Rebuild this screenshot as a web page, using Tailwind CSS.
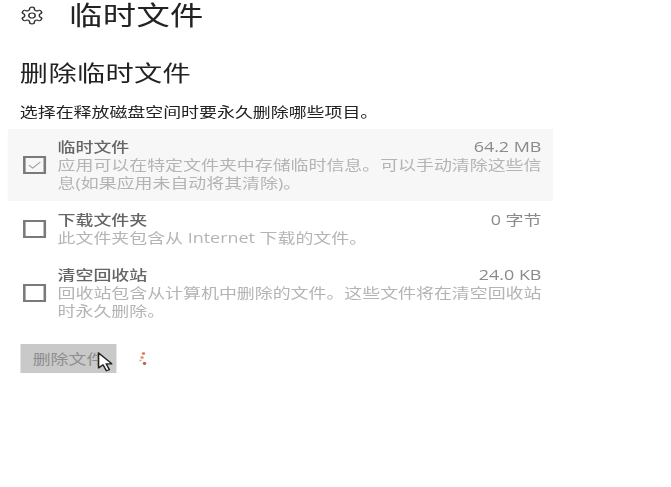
<!DOCTYPE html>
<html lang="zh-CN">
<head>
    <meta charset="UTF-8">
    <title>临时文件</title>
    <script src="https://cdn.jsdelivr.net/npm/@tailwindcss/browser@4"></script>
</head>
<body class="bg-white overflow-hidden font-['Open_Sans','Noto_Sans_CJK_SC',sans-serif]">
    <div class="w-[524px] h-[487px] origin-top-left scale-x-[1.28] blur-[0.5px]">
        <!-- page title -->
        <div class="flex items-center h-[30px] pl-[15px] gap-[19px]">
            <svg class="w-[20px] h-[23px] text-[#333]" viewBox="0 0 24 24" fill="none" stroke="currentColor" stroke-width="1.4" stroke-linejoin="round">
                <circle cx="12" cy="12" r="3"/>
                <path d="M12.22 2h-.44a2 2 0 0 0-2 2v.18a2 2 0 0 1-1 1.73l-.43.25a2 2 0 0 1-2 0l-.15-.08a2 2 0 0 0-2.73.73l-.22.38a2 2 0 0 0 .73 2.73l.15.1a2 2 0 0 1 1 1.72v.51a2 2 0 0 1-1 1.74l-.15.09a2 2 0 0 0-.73 2.73l.22.38a2 2 0 0 0 2.73.73l.15-.08a2 2 0 0 1 2 0l.43.25a2 2 0 0 1 1 1.73V20a2 2 0 0 0 2 2h.44a2 2 0 0 0 2-2v-.18a2 2 0 0 1 1-1.73l.43-.25a2 2 0 0 1 2 0l.15.08a2 2 0 0 0 2.73-.73l.22-.39a2 2 0 0 0-.73-2.73l-.15-.08a2 2 0 0 1-1-1.74v-.5a2 2 0 0 1 1-1.74l.15-.09a2 2 0 0 0 .73-2.73l-.22-.38a2 2 0 0 0-2.73-.73l-.15.08a2 2 0 0 1-2 0l-.43-.25a2 2 0 0 1-1-1.73V4a2 2 0 0 0-2-2z"/>
            </svg>
            <h1 class="text-[26px] leading-[30px] text-[#222] tracking-[0.3px]">临时文件</h1>
        </div>

        <h2 class="mt-[26px] pl-[15.5px] text-[22px] leading-[32px] text-[#222] tracking-[0.3px]">删除临时文件</h2>
        <p class="mt-[14px] pl-[15.5px] text-[14px] leading-[20px] text-[#222]">选择在释放磁盘空间时要永久删除哪些项目。</p>

        <div class="mt-[7px] ml-[6px] w-[426px]">
            <div class="flex items-center gap-[9px] pl-[12px] pr-[9px] py-[9px] bg-[#f7f7f7]">
                <div class="w-[18px] h-[18px] shrink-0 border-2 border-[#7a7a7a] flex items-center justify-center">
                    <svg class="w-[14px] h-[14px]" viewBox="0 0 14 14" fill="none" stroke="#999" stroke-width="1"><path d="M2.5 7l3 3 6-6"/></svg>
                </div>
                <div class="flex-1 text-[14px] leading-[18px]">
                    <div class="flex justify-between text-[#666]"><span class="font-medium">临时文件</span><span class="text-[#8a8a8a]">64.2 MB</span></div>
                    <p class="text-[#b4b4b4]">应用可以在特定文件夹中存储临时信息。可以手动清除这些信息(如果应用未自动将其清除)。</p>
                </div>
            </div>
            <div class="mt-px flex items-center gap-[9px] pl-[12px] pr-[9px] py-[9px]">
                <div class="w-[18px] h-[18px] shrink-0 border-2 border-[#7a7a7a]"></div>
                <div class="flex-1 text-[14px] leading-[18px]">
                    <div class="flex justify-between text-[#666]"><span class="font-medium">下载文件夹</span><span class="text-[#8a8a8a]">0 字节</span></div>
                    <p class="text-[#b4b4b4]">此文件夹包含从 Internet 下载的文件。</p>
                </div>
            </div>
            <div class="mt-px flex items-center gap-[9px] pl-[12px] pr-[9px] py-[9px]">
                <div class="w-[18px] h-[18px] shrink-0 border-2 border-[#7a7a7a]"></div>
                <div class="flex-1 text-[14px] leading-[18px]">
                    <div class="flex justify-between text-[#666]"><span class="font-medium">清空回收站</span><span class="text-[#8a8a8a]">24.0 KB</span></div>
                    <p class="text-[#b4b4b4]">回收站包含从计算机中删除的文件。这些文件将在清空回收站时永久删除。</p>
                </div>
            </div>
        </div>

        <!-- button and spinner -->
        <div class="mt-[15px] ml-[16px] flex items-center gap-[16px]">
            <div class="relative w-[75px] h-[29px] bg-[#c9c9c9] flex items-center justify-center text-[14px] text-[#8e8e8e]">
                删除文件
                <svg class="absolute left-[60px] top-[8px] w-[12px] h-[21px]" viewBox="0 0 12 21">
                    <path d="M1 1v15l3.5-3.2 2.6 6 2.4-1-2.6-6h4.6z" fill="#fff" stroke="#222" stroke-width="1.2" stroke-linejoin="round"/>
                </svg>
            </div>
            <svg class="w-[8px] h-[18px]" viewBox="0 0 8 18">
                <circle cx="5.1" cy="3.5" r="1.3" fill="#d8704a"/>
                <circle cx="4" cy="7.5" r="1.3" fill="#e58a5f"/>
                <circle cx="2.7" cy="10.5" r="1" fill="#f0b090"/>
                <circle cx="5.9" cy="13.5" r="1.4" fill="#b8604a"/>
            </svg>
        </div>
    </div>
</body>
</html>
